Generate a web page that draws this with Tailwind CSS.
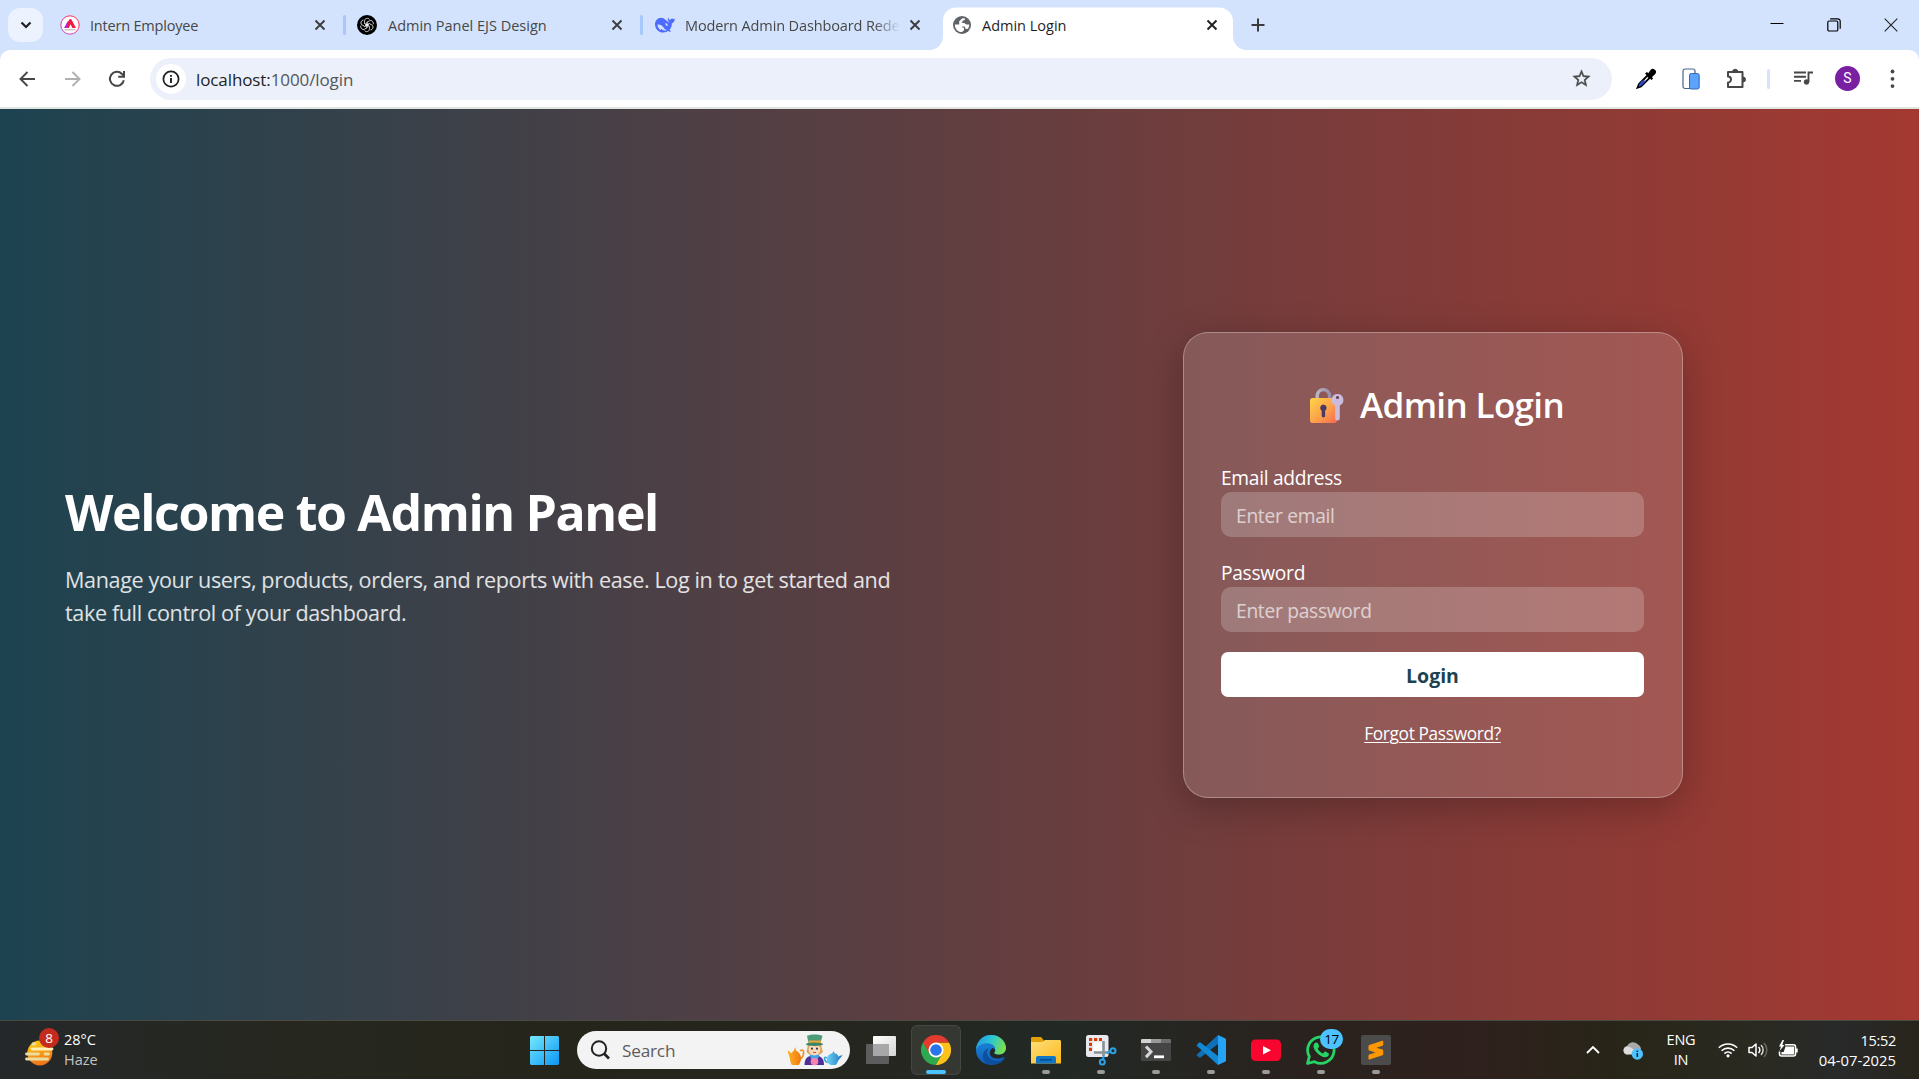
<!DOCTYPE html>
<html lang="en">
<head>
<meta charset="utf-8">
<title>Admin Login</title>
<script src="https://cdn.jsdelivr.net/npm/@tailwindcss/browser@4"></script>
</head>
<body class="flex h-[1079px] w-[1919px] flex-col overflow-hidden bg-[#d3e3fd] font-['Open_Sans','Noto_Sans',sans-serif]">

<!-- Tab strip -->
<div class="flex h-[50px] shrink-0 items-center text-[14.5px] text-[#474747]">
  <button class="ml-2 flex h-[34px] w-[35px] items-center justify-center rounded-xl bg-[#ecf2fe]">
    <svg class="h-3 w-3" viewBox="0 0 12 12" fill="none" stroke="#1f1f1f" stroke-width="2.2"><path d="M1.5 3.500 6 8l4.500-4.500"/></svg>
  </button>
  <div class="flex w-[300px] items-center pl-[17px] pr-[17px]">
    <svg class="h-5 w-5 shrink-0" viewBox="0 0 20 20">
      <defs><linearGradient id="ie" x1="0" y1="1" x2="1" y2="0"><stop offset="0" stop-color="#b44cf0"/><stop offset=".5" stop-color="#f0288c"/><stop offset="1" stop-color="#f43b2f"/></linearGradient></defs>
      <circle cx="10" cy="10" r="9.200" fill="#fff" stroke="url(#ie)" stroke-width="1"/>
      <path d="M4 13 7.500 6.500c.5-.8 1.200-.8 1.700 0L10 8l-2.200 5z" fill="#b02be0"/><path d="M9 5c.8-1.500 2-1.500 2.700 0L16 13h-3.600L10.500 9.200 8.800 13H6.500z" fill="#f5173f"/>
      <path d="M4.500 14.800h11" stroke="#b9b9b9" stroke-width="1.200"/>
    </svg>
    <span class="ml-[10px] flex-1 pt-[2px] tracking-[-0.2px] whitespace-nowrap">Intern Employee</span>
    <svg class="h-3 w-3" viewBox="0 0 12 12" stroke="#3c3c3c" stroke-width="1.900"><path d="m1.500 1.500 9 9m0-9-9 9"/></svg>
  </div>
  <div class="h-5 w-[3px] rounded bg-[#a8c7fa]"></div>
  <div class="flex w-[294px] items-center pl-[11px] pr-[17px]">
    <svg class="h-5 w-5 shrink-0" viewBox="0 0 20 20" fill="none">
      <circle cx="10" cy="10" r="10" fill="#000"/>
      <g stroke="#fff" stroke-width=".75">
        <path d="M7.600 8.600V5.800c0-2.700 3.900-3.200 4.900-1.300M7.600 8.600l4.800 2.800"/>
        <path d="M7.600 8.600V5.800c0-2.700 3.900-3.200 4.900-1.300M7.600 8.600l4.800 2.800" transform="rotate(60 10 10)"/>
        <path d="M7.600 8.600V5.800c0-2.700 3.900-3.200 4.900-1.300M7.600 8.600l4.800 2.800" transform="rotate(120 10 10)"/>
        <path d="M7.600 8.600V5.800c0-2.700 3.900-3.200 4.900-1.300M7.600 8.600l4.800 2.800" transform="rotate(180 10 10)"/>
        <path d="M7.600 8.600V5.800c0-2.700 3.900-3.200 4.900-1.300M7.600 8.600l4.800 2.800" transform="rotate(240 10 10)"/>
        <path d="M7.600 8.600V5.800c0-2.700 3.900-3.200 4.900-1.300M7.600 8.600l4.800 2.800" transform="rotate(300 10 10)"/>
      </g>
    </svg>
    <span class="ml-[11px] flex-1 pt-[2px] whitespace-nowrap">Admin Panel EJS Design</span>
    <svg class="h-3 w-3" viewBox="0 0 12 12" stroke="#3c3c3c" stroke-width="1.900"><path d="m1.500 1.500 9 9m0-9-9 9"/></svg>
  </div>
  <div class="h-5 w-[3px] rounded bg-[#a8c7fa]"></div>
  <div class="flex w-[300px] items-center pl-[12px] pr-[22px]">
    <svg class="h-5 w-5 shrink-0" viewBox="0 0 20 20">
      <path d="M19.700 3.800c-.8.2-1.300.2-1.900-.1-.8-.4-1.400-.3-2 .5-.7.900-1.200 1-1.700.3-.4-.6-.6-1-.5-1.900-.9.500-1 1.800-.6 2.800.3.9 1.100 1.500 1.500 2.300C12 6.500 11 4.800 8.500 3.300 4.500 1.300 0 4.600 0 9.200c0 4.800 3.800 8.300 8.400 8.300 2 0 3.500-.6 4.700-1.400 1 .6 2.200.7 3 .3-.5-.7-1.200-1-1.500-1.500 1.800-2 2.200-4 2.200-6.300 1.800-.7 3-2.200 2.900-4.800z" fill="#4d6bfe"/>
      <path d="M2.500 9.500c2.200-.3 4 .2 5.700 2.600 1 1.500 1.900 2.600 3.400 3.100-1.800.7-3.300.3-5-1.200-.8 0-.8.9-.2 1.400-2.300-.9-3.900-3.300-3.900-5.900z" fill="#d3e3fd"/><path d="M10.300 8.500c1.300-.7 2.600.6 2.300 2.400-.9.300-2.300-.8-2.300-2.400z" fill="#d3e3fd"/>
    </svg>
    <span class="ml-[10px] pt-[2px] tracking-[-0.12px] whitespace-nowrap [mask-image:linear-gradient(90deg,#000_88%,transparent_100%)]">Modern Admin Dashboard Rede</span>
    <svg class="ml-auto h-3 w-3 shrink-0" viewBox="0 0 12 12" stroke="#3c3c3c" stroke-width="1.900"><path d="m1.500 1.500 9 9m0-9-9 9"/></svg>
  </div>
  <div class="relative flex h-[50px] w-[290px] items-center pl-[10px] pr-[15px] text-[#1f1f1f]">
    <svg class="absolute -left-[14px] top-0 h-[50px] w-[318px]" viewBox="0 0 318 50" fill="#fff"><path d="M0 50c8 0 14-6 14-14V21c0-8 5.500-13.500 13.500-13.500h262C297.500 7.500 304 13 304 21v15c0 8 6 14 14 14z"/></svg>
    <svg class="relative h-[18px] w-[18px] shrink-0" viewBox="0 0 18 18">
      <circle cx="9" cy="9" r="9" fill="#5f6368"/>
      <path d="M1.900 8.500h4.600l2.500 1.200v1.600l2 .5v2.400l-2 1.900C5 16.400 1.500 12.500 1.900 8.500zM6.200 5.200 9.300 2.200l2.900.3-.5 1.500-2.200.7v1.500l-1.200.9h2.900l2 1.400 2.900-.1.200.9-1.100 3.500-2.500.2-1-2.400-2.800-.1L6.200 8.700z" fill="#fff"/>
    </svg>
    <span class="relative ml-[11px] flex-1 pt-[2px] whitespace-nowrap">Admin Login</span>
    <svg class="relative h-3 w-3" viewBox="0 0 12 12" stroke="#1f1f1f" stroke-width="1.900"><path d="m1.500 1.500 9 9m0-9-9 9"/></svg>
  </div>
  <svg class="ml-[18px] h-[14px] w-[14px]" viewBox="0 0 14 14" stroke="#3c3c3c" stroke-width="2"><path d="M7 .5v13M.5 7h13"/></svg>
  <div class="ml-auto mr-[21px] flex items-center gap-[43px]">
    <svg class="h-[14px] w-[14px]" viewBox="0 0 14 14" stroke="#000" stroke-width="1"><path d="M.5 5.500h13"/></svg>
    <svg class="h-[14px] w-[14px]" viewBox="0 0 14 14" fill="none" stroke="#000" stroke-width="1.200"><rect x=".8" y="3" width="10" height="10" rx="1.300"/><path d="M3.200.8h7.500a2.500 2.500 0 0 1 2.500 2.500v7.500"/></svg>
    <svg class="h-[14px] w-[14px]" viewBox="0 0 14 14" stroke="#222" stroke-width="1.100"><path d="m.7.7 12.600 12.600m0-12.600L.7 13.300"/></svg>
  </div>
</div>

<!-- Toolbar -->
<div class="flex h-[59px] shrink-0 items-center rounded-t-[10px] border-b-2 border-[#dfe5e0] bg-white pl-[18px] text-[#474747]">
  <svg class="h-[18px] w-[18px]" viewBox="0 0 18 18" fill="none" stroke="#474747" stroke-width="1.900"><path d="M17 9H3M9.500 2 2.500 9l7 7"/></svg>
  <svg class="ml-[28px] h-[18px] w-[18px]" viewBox="0 0 18 18" fill="none" stroke="#b0b0b0" stroke-width="1.900"><path d="M1 9h14M8.500 2l7 7-7 7"/></svg>
  <svg class="ml-[26px] h-[18px] w-[18px]" viewBox="0 0 18 18" fill="none" stroke="#474747" stroke-width="2"><path d="M15.800 10.200A7 7 0 1 1 14 4l1.800 1.800"/><path d="M16 1v5.800h-5.800"/></svg>
  <div class="ml-[24px] flex h-[42px] w-[1462px] items-center rounded-full bg-[#ebf0fa] pl-[6px] pr-[20px]">
    <div class="flex h-[30px] w-[30px] items-center justify-center rounded-full bg-white">
      <svg class="h-[18px] w-[18px]" viewBox="0 0 18 18" fill="none" stroke="#1f1f1f" stroke-width="1.700"><circle cx="9" cy="9" r="7.600"/><path d="M9 8v5M9 5v1.700" stroke-width="1.900"/></svg>
    </div>
    <p class="ml-[10px] pt-[2px] text-[17px] tracking-[-0.1px]"><span class="text-[#1f1f1f]">localhost:</span><span class="text-[#54565a]">1000/login</span></p>
    <svg class="ml-auto h-[21px] w-[21px]" viewBox="0 0 24 24" fill="#474747"><path d="M22 9.240l-7.190-.62L12 2 9.190 8.630 2 9.240l5.460 4.730L5.820 21 12 17.270 18.180 21l-1.630-7.030L22 9.240zM12 15.400l-3.760 2.270 1-4.280-3.320-2.880 4.380-.38L12 6.100l1.710 4.040 4.380.38-3.320 2.880 1 4.280L12 15.400z" stroke="#474747" stroke-width=".4"/></svg>
  </div>
  <svg class="ml-[24px] h-[21px] w-[21px]" viewBox="0 0 21 21">
    <path d="M11.500 7.500 3 16l-1.500 3.700L5 18.500l8.600-8.600z" fill="#fff" stroke="#000" stroke-width="1.800"/><path d="m6.200 12.500 4.200.3-5.500 5.200-2.400.8 1-3z" fill="#2c49c8"/>
    <path d="m9 5.500 2-1.500 1.300 1.200L14.500 2a3 3 0 0 1 4.600 4.200L16 9l1 1.400-1.500 1.700z" fill="#000"/>
  </svg>
  <svg class="ml-[25px] h-[22px] w-[18px]" viewBox="0 0 18 22">
    <path d="M1 3a2 2 0 0 1 2-2h8a2 2 0 0 1 2 2v17.500H3a2 2 0 0 1-2-2z" fill="#fff" stroke="#47658c" stroke-width="1.200"/><rect x="7.500" y="5.500" width="9.700" height="15.500" rx="1.800" fill="#5ba3fb" stroke="#3469b0"/>
  </svg>
  <svg class="ml-[25px] h-[23px] w-[23px]" viewBox="0 0 23 23" fill="none" stroke="#474747" stroke-width="2"><path d="M3 5h14.500v15H3v-4.500a3 3 0 0 0 0-6z" stroke-linejoin="round"/><path d="M7.500 5a2.700 2.700 0 0 1 5.400 0zM18 10a2.500 2.500 0 0 1 0 5z" fill="#474747" stroke-width="1"/></svg>
  <div class="ml-[19px] h-5 w-[3px] rounded bg-[#d3e3fd]"></div>
  <svg class="ml-[23px] h-[20px] w-[21px]" viewBox="0 0 21 20" fill="none" stroke="#474747" stroke-width="1.900"><path d="M1 3.500h12M1 7.700h12M1 11.900h7"/><circle cx="13.500" cy="13" r="2.300" fill="#474747" stroke-width="1"/><path d="M15.500 13V3.500H20"/></svg>
  <div class="ml-[21px] flex h-[25px] w-[25px] items-center justify-center rounded-full bg-[#7b1fa2] font-[Roboto] text-[14px] text-white">S</div>
  <svg class="ml-[30px] h-[20px] w-[5px]" viewBox="0 0 5 20" fill="#474747"><circle cx="2.500" cy="2.500" r="1.900"/><circle cx="2.500" cy="9.800" r="1.900"/><circle cx="2.500" cy="17.100" r="1.900"/></svg>
</div>

<!-- Page -->
<main class="flex flex-1 items-center justify-between bg-linear-to-r from-[#1d4350] to-[#a43931] [--tw-gradient-position:to_right] pl-[65px] pr-[236px] text-white">
  <section class="pb-[18px]">
    <h1 class="text-[50px] leading-[60px] font-bold tracking-[-1.35px]">Welcome to Admin Panel</h1>
    <p class="mt-[21px] text-[21.6px] leading-[33.500px] tracking-[-0.38px] whitespace-nowrap text-white/85">Manage your users, products, orders, and reports with ease. Log in to get started and<br>take full control of your dashboard.</p>
  </section>
  <form class="flex h-[466px] w-[500px] flex-col rounded-[25px] border border-white/30 bg-white/15 pr-[38px] pl-[37px] pt-[50px] shadow-[0_10px_38px_rgba(0,0,0,0.25)]">
    <h2 class="flex h-[44px] items-center pl-[88px] text-[35px] leading-[44px] font-semibold tracking-[-0.65px]">
      <svg class="h-[36px] w-[36px]" viewBox="0 0 36 36">
        <defs>
          <linearGradient id="lk" x1="0" y1="0" x2="1" y2="1"><stop offset="0" stop-color="#ffd446"/><stop offset=".55" stop-color="#fca14b"/><stop offset="1" stop-color="#f4694f"/></linearGradient>
          <linearGradient id="sh" x1="0" x2="1"><stop offset="0" stop-color="#b9b4c4"/><stop offset="1" stop-color="#9a8cab"/></linearGradient>
        </defs>
        <path d="M8.200 13V8.800a6.200 6.200 0 0 1 12.400 0V13" fill="none" stroke="url(#sh)" stroke-width="3.400"/>
        <rect x="1" y="11" width="27" height="25" rx="2.800" fill="url(#lk)"/>
        <path d="M14.400 17.500a3.500 3.500 0 0 0-1.700 6.400v4.800a1.700 1.700 0 0 0 3.400 0v-4.800a3.500 3.500 0 0 0-1.700-6.400z" fill="#4a3a63"/>
        <path fill-rule="evenodd" d="M28.500 7a6 6 0 0 0-2.300 11.500V31.300a2.300 2.300 0 0 0 4.600 0V18.500A6 6 0 0 0 28.500 7zm0 2a1.500 1.500 0 1 1 0 3 1.500 1.500 0 0 1 0-3z" fill="#cbbbdc"/><circle cx="28.500" cy="10.500" r="1.300" fill="#5a3d5c"/>
      </svg>
      <span class="ml-[15px]">Admin Login</span>
    </h2>
    <label class="mt-[38px] block h-[26px] text-[19.2px] leading-[26px] tracking-[-0.3px]" for="email">Email address</label>
    <input id="email" type="email" placeholder="Enter email" class="mt-px h-[45px] shrink-0 rounded-[10px] bg-white/20 px-[15px] pt-[2px] text-[19.2px] tracking-[-0.28px] placeholder:text-white/65">
    <label class="mt-[23px] block h-[26px] text-[19.2px] leading-[26px] tracking-[-0.3px]" for="password">Password</label>
    <input id="password" type="password" placeholder="Enter password" class="mt-px h-[45px] shrink-0 rounded-[10px] bg-white/20 px-[15px] pt-[2px] text-[19.2px] tracking-[-0.28px] placeholder:text-white/65">
    <button type="button" class="mt-[20px] h-[45px] shrink-0 rounded-[7px] bg-white pt-[3px] text-[19.500px] leading-[26px] font-bold text-[#1d4350]">Login</button>
    <a class="mt-[24px] self-center text-[17.3px] leading-[26px] tracking-[-0.35px] underline decoration-1 underline-offset-2">Forgot Password?</a>
  </form>
</main>

<!-- Taskbar -->
<footer class="flex h-[59px] shrink-0 items-center border-t border-[#4b4a42] bg-[linear-gradient(90deg,#25282a_0%,#26271e_16%,#25251c_30%,#25261f_46%,#222925_55%,#2a221e_68%,#2f211d_77%,#282518_84%,#2a2a22_92%,#28292a_96%,#28251b_100%)] text-[14.5px] text-white">
  <div class="relative ml-[24px] h-[40px] w-[36px]">
    <svg class="absolute top-[9px] left-0 h-[30px] w-[32px]" viewBox="0 0 32 30">
      <defs><linearGradient id="sun" x1="0" y1="0" x2=".3" y2="1"><stop offset="0" stop-color="#ffd30a"/><stop offset="1" stop-color="#f0761c"/></linearGradient></defs>
      <circle cx="15.800" cy="14" r="12.500" fill="url(#sun)"/>
      <g stroke="#eddc9f" stroke-width="2.800" stroke-linecap="round"><path d="M8 10h20" stroke="#fff0b8"/><path d="M2.500 15h12M21 15h3.500M9 5h2M2.500 20h21"/></g>
    </svg>
    <div class="absolute top-[-2px] left-[15px] flex h-5 w-5 items-center justify-center rounded-full bg-[#c42b1c] text-[13.500px]">8</div>
  </div>
  <div class="ml-[4px] w-[60px] leading-[20px]"><p>28°C</p><p class="text-[#c3c3c1]">Haze</p></div>

  <svg class="ml-[406px] h-[29px] w-[29px]" viewBox="0 0 29 29">
    <defs><linearGradient id="win" x1="0" y1="0" x2="1" y2="1"><stop offset="0" stop-color="#74e9fd"/><stop offset="1" stop-color="#0c95f5"/></linearGradient></defs>
    <path d="M1 0h13v14H0V1zM15 0h13l1 1v13H15zM0 15h14v14H1l-1-1zM15 15h14v13l-1 1H15z" fill="url(#win)"/>
  </svg>
  <div class="ml-[18px] flex h-[38px] w-[273px] items-center rounded-full bg-[#f3f3f3] pl-[13px]">
    <svg class="h-5 w-5" viewBox="0 0 20 20" fill="none" stroke="#222" stroke-width="2"><circle cx="9" cy="8.500" r="7.200"/><path d="m14 13.500 5 5" stroke-width="2.600"/></svg>
    <span class="ml-[12px] pt-px text-[17.2px] tracking-[-0.2px] text-[#5d5d5d]">Search</span>
    <svg class="ml-auto mr-[6px] h-[32px] w-[57px]" viewBox="0 0 57 32">
      <defs><linearGradient id="tp" x1="0" x2="1"><stop offset="0" stop-color="#ffb429"/><stop offset="1" stop-color="#f0780c"/></linearGradient><linearGradient id="tb" x1="0" x2="1"><stop offset="0" stop-color="#6fd2f3"/><stop offset="1" stop-color="#1774c4"/></linearGradient></defs>
      <path d="M13 17c4.500-3.500 5 4 .5 8" fill="none" stroke="#f08a1d" stroke-width="1.500"/>
      <path d="M8 13l1 3.500c3 1.500 5.500 5 5 9-.5 2.500-1.500 5-2.500 5.500H5c-1.500-2-2-4-2-6C2.500 22 .5 19 .8 16.800c2 .2 2.500 1.700 3.200 2.400L7 16.500z" fill="url(#tp)"/>
      <path d="M17.500 31c0-5 2-8.500 6-9h7.500c4 .5 6 4 6 9z" fill="#4d2f96"/><path d="M22.500 20.500h10l-2 5.500h-6z" fill="#3da7e8"/>
      <path d="M20.500 13c0-3 3-4 7-4s7 1 7 4l1.500 5-3 2.500H22.500l-3-2.500z" fill="#dca75e"/><ellipse cx="27.500" cy="15.500" rx="5.800" ry="6" fill="#fcd7b8"/>
      <circle cx="25" cy="14.700" r="1.100" fill="#32465a"/><circle cx="30" cy="14.700" r="1.100" fill="#32465a"/><path d="M26 18.500h3" stroke="#c9574a"/>
      <path d="M20 1.800c4.500-1.800 11-1.800 15.500 0L33.500 9h-12z" fill="#4c9c78"/><path d="M21.500 6.500h12.500v2.500H22z" fill="#e8a33d"/><ellipse cx="27.500" cy="10.300" rx="8.500" ry="1.700" fill="#3b8465"/>
      <circle cx="27.500" cy="27.500" r="3.800" fill="#f782ae"/>
      <path d="M40 24c-4-3-3 4 1 4.500" fill="none" stroke="#3aa5dc" stroke-width="1.500"/>
      <path d="M46.500 17l1.200 2.200c2.300.5 3.300 1.800 3.800 3.500 1-.9 2.500-1.500 4.500-1.200-2 1-3.500 3.500-5 5.500-.7 2-1.500 3.500-2.500 4h-5c-2.500-1.500-3.800-3.500-3.800-6 .3-3 2.500-5.300 5.500-5.800z" fill="url(#tb)"/>
    </svg>
  </div>

  <div class="ml-[16px] flex items-center">
    <svg class="h-[30px] w-[30px]" viewBox="0 0 30 30">
      <defs><linearGradient id="tv" x1="0" y1="0" x2="1" y2="1"><stop offset="0" stop-color="#fff"/><stop offset="1" stop-color="#d4d4d4"/></linearGradient></defs>
      <rect x="7" y="1" width="23" height="20" rx="1" fill="url(#tv)"/><rect x="0" y="9" width="23" height="20" rx="1" fill="#5d5d5d"/><path d="M7 9h16v12H7z" fill="#a7a7a7"/>
    </svg>
    <div class="relative ml-[15px] flex h-[50px] w-[50px] items-center justify-center rounded-md border border-white/8 bg-white/8">
      <svg class="h-[30px] w-[30px]" viewBox="0 0 48 48">
        <path d="M24 24 3.200 12A24 24 0 0 0 24 48l10.400-18z" fill="#2da94f"/><path d="M24 24h20.800A24 24 0 0 1 24 48l10.400-18z" fill="#fcc21b"/><path d="M24 48A24 24 0 0 0 44.800 12H24l10.400 18z" fill="#fcc21b"/><path d="M3.200 12a24 24 0 0 1 41.600 0H24L13.600 30z" fill="#e33b2e"/>
        <circle cx="24" cy="24" r="12" fill="#fff"/><circle cx="24" cy="24" r="9.300" fill="#2a74ea"/>
      </svg>
      <i class="absolute bottom-0 left-[14px] h-1 w-5 rounded-full bg-[#4cc2ff]"></i>
    </div>
    <div class="ml-[15px] flex gap-[25px]">
      <div class="h-[30px] w-[30px]">
        <svg viewBox="0 0 30 30">
          <defs><linearGradient id="e1" x1="0" y1=".2" x2="1" y2=".5"><stop offset="0" stop-color="#2196e8"/><stop offset=".5" stop-color="#2fc6cf"/><stop offset="1" stop-color="#7be04a"/></linearGradient><linearGradient id="e2" x1="0" y1="0" x2="0" y2="1"><stop offset="0" stop-color="#1b8fe0"/><stop offset="1" stop-color="#0f5cb4"/></linearGradient></defs>
          <circle cx="15" cy="15" r="15" fill="url(#e2)"/>
          <path d="M0 14.500C.7 6 7 0 15 0c9 0 15 6.500 15 12.800 0 4.200-3 6.900-7 6.900-3.500 0-5-1.200-5-2 0-.7 1.200-1.500 1.200-3.700 0-3.300-3.600-5.800-8-5.800C6 8.200 2 10.500 0 14.500z" fill="url(#e1)"/>
          <path d="M12.500 13c-3.500 4.500-.5 12 7 13 4 .3 7-.8 9-3 .8-.8 1-.3.700.3C26.500 27.500 21 30 15.500 30 8.500 30 6.500 24 7 20.500 7.300 17 9.500 14.200 12.500 13z" fill="#0c4f9e"/>
          <path d="M18.200 17.700c-.4.800 1.300 2 4.800 2 2.700 0 4.500-1 5.800-2.400L30 15v6l-2.300 1.200c-4 2-9.700 2-12.500-.7-2.200-2.500-1.700-6.500 1.300-8.500 2 .5 3 2 2.700 3z" fill="#23272a"/>
        </svg>
      </div>
      <div class="relative h-[30px] w-[30px]">
        <svg viewBox="0 0 30 30">
          <defs><linearGradient id="fo" x1="0" y1="0" x2="1" y2="1"><stop offset="0" stop-color="#ffe07a"/><stop offset="1" stop-color="#fbb81c"/></linearGradient></defs>
          <path d="M0 3.500C0 2.500.7 2 1.500 2H10l3 3.500V10H0z" fill="#e3a008"/><path d="M0 7h11l3-2h14.500c1 0 1.500.6 1.500 1.500V28.500H0z" fill="url(#fo)"/><path d="M5 23a2 2 0 0 1 2-2h16a2 2 0 0 1 2 2v5.500H5z" fill="#1076c8"/><path d="M9 24.800h12" stroke="#0a4b8c" stroke-width="1.600"/>
        </svg>
        <i class="absolute top-[35px] left-[11px] h-1 w-2 rounded-full bg-[#9b9b99]"></i>
      </div>
      <div class="relative h-[30px] w-[30px]">
        <svg viewBox="0 0 30 30" class="overflow-visible" fill="none">
          <rect width="22.500" height="22" rx="2.500" fill="#e9eaf0"/><path d="M4.500 16V4.500H16" stroke="#d83b01" stroke-width="3" stroke-dasharray="3.200 1.800"/><path d="M7.500 16V7.500h8.500V16z" fill="#fff"/>
          <path d="M17.500 6v15M8 17.500h14" stroke="#8b929a" stroke-width="2.600"/><circle cx="16.300" cy="27" r="2.500" stroke="#2aa2ea" stroke-width="2"/><circle cx="27" cy="15.800" r="2.500" stroke="#2aa2ea" stroke-width="2"/><path d="m17 24.500 1-4M24.500 16.500l-4 1.500" stroke="#2aa2ea" stroke-width="2"/>
        </svg>
        <i class="absolute top-[35px] left-[11px] h-1 w-2 rounded-full bg-[#9b9b99]"></i>
      </div>
      <div class="relative h-[30px] w-[30px]">
        <svg viewBox="0 0 30 30" fill="none">
          <rect y="4" width="30" height="22" rx="1.500" fill="#454545"/><path d="M0 8V5.500C0 4.500.5 4 1.500 4H10v4z" fill="#d2d2d2"/><path d="M10 4h10v4H10z" fill="#9a9a9a"/><path d="M20 4h8.500c1 0 1.500.6 1.500 1.500V8H20z" fill="#6d6d6d"/>
          <path d="m5 11.500 5 5.300-5 5.300" stroke="#d6d6d6" stroke-width="3"/><path d="M13 21.800h10" stroke="#fff" stroke-width="2.800"/>
        </svg>
        <i class="absolute top-[35px] left-[11px] h-1 w-2 rounded-full bg-[#9b9b99]"></i>
      </div>
      <div class="relative h-[30px] w-[30px]">
        <svg viewBox="0 0 30 30">
          <path d="M22 0 2 18.500 0.500 20 3 22.500h1.500L22 9z" fill="#0f6fb8"/><path d="M22 30 .5 10.500 3 7.500h1.500L22 21z" fill="#1287d4"/><path d="M22 0l7 3.300c.6.300 1 .8 1 1.500v20.400c0 .7-.4 1.200-1 1.500L22 30z" fill="#26a3f2"/>
        </svg>
        <i class="absolute top-[35px] left-[11px] h-1 w-2 rounded-full bg-[#9b9b99]"></i>
      </div>
      <div class="relative h-[30px] w-[30px]">
        <svg viewBox="0 0 30 30"><rect y="4.500" width="30" height="21.500" rx="4.500" fill="#f8062f"/><path d="m12 11 8 4.200-8 4.300z" fill="#fff"/></svg>
        <i class="absolute top-[35px] left-[11px] h-1 w-2 rounded-full bg-[#9b9b99]"></i>
      </div>
      <div class="relative h-[30px] w-[30px]">
        <svg viewBox="0 0 30 30" fill="none">
          <path d="M1.500 28.500 3.300 21.500A13.200 13.200 0 1 1 8.500 26.700z" stroke="#25d366" stroke-width="2.800" stroke-linejoin="round"/>
          <path d="M10 7.500c-.9 0-2.500 1.300-2.500 3.800 0 4 6.500 11 11.500 11 2.500 0 4-1.700 4-3.300 0-.8-3.500-2.600-4-2.600-.7 0-1.500 2-2.200 2-.8 0-5-3.400-5-4.700 0-.7 1.400-1.300 1.400-2.100 0-.6-1.200-3.600-1.700-3.900z" fill="#25d366"/>
        </svg>
        <div class="absolute top-[-6px] left-[14px] flex h-5 w-[23px] items-center justify-center rounded-full bg-[#4cc2ff] text-[13.5px] tracking-[-0.5px] text-black">17</div>
        <i class="absolute top-[35px] left-[11px] h-1 w-2 rounded-full bg-[#9b9b99]"></i>
      </div>
      <div class="relative h-[30px] w-[30px]">
        <svg viewBox="0 0 30 30"><rect width="30" height="30" rx="2" fill="#4b4b4b"/><path d="M7.500 11.200c0-.7.2-1 .8-1.200l13-4.200c.6-.2.900 0 .9.500v3.200c0 .6-.3 1-.8 1.200l-6 2 6 1.900c.6.200.8.600.8 1.200v3.200c0 .7-.2 1-.8 1.200l-13 4.300c-.6.200-.9 0-.9-.5v-3.200c0-.7.200-1 .8-1.200l6.200-2-6.200-2c-.6-.2-.8-.5-.8-1.100z" fill="#ff9800"/></svg>
        <i class="absolute top-[35px] left-[11px] h-1 w-2 rounded-full bg-[#9b9b99]"></i>
      </div>
    </div>
  </div>

  <div class="mr-[23px] ml-auto flex items-center">
    <svg class="h-[14px] w-[14px]" viewBox="0 0 14 14" fill="none" stroke="#fff" stroke-width="1.900"><path d="m1 10 6-6 6 6"/></svg>
    <svg class="ml-[23px] h-[20px] w-[20px]" viewBox="0 0 20 20"><path d="M4.500 14.500a4.300 4.300 0 0 1-.3-8.500A6.500 6.500 0 0 1 15 4.500c2 1 3 3 3 5z" fill="#a9a9a9"/><path d="M4.500 14.500a4 4 0 0 1-4-4.500c.5-3 4-4.500 7-2.500L16 13l-2 1.500z" fill="#dcdcdc"/><circle cx="14.300" cy="14" r="5.700" fill="#4cc2ff"/><path d="M14.300 13v4M14.300 10.500v1.500" stroke="#123" stroke-width="1.500"/></svg>
    <div class="ml-[22px] w-[32px] text-center leading-[20px] tracking-[-0.2px]"><p>ENG</p><p>IN</p></div>
    <svg class="ml-[21px] h-[20px] w-[20px]" viewBox="0 0 20 20" fill="none" stroke="#fff" stroke-width="1.600"><path d="M.8 7.800a13 13 0 0 1 18.400 0M3.600 10.800a9 9 0 0 1 12.800 0M6.400 13.600a5 5 0 0 1 7.200 0"/><circle cx="10" cy="15.800" r="1.600" fill="#fff" stroke="none"/></svg>
    <svg class="ml-[10px] h-[20px] w-[20px]" viewBox="0 0 20 20" fill="none" stroke="#fff" stroke-width="1.500"><path d="M1 7.500h3L8 4v12l-4-3.500H1z" stroke-linejoin="round"/><path d="M10.500 7a4 4 0 0 1 0 6"/><path d="M13 5a7 7 0 0 1 0 10" stroke="#d8d8d4"/><path d="M16 3a10 10 0 0 1 0 14" stroke="#6b695f"/></svg>
    <svg class="ml-[10px] h-[20px] w-[20px]" viewBox="0 0 20 20"><path d="M7 4.800h8.500a2 2 0 0 1 2 2V14a2 2 0 0 1-2 2H3.500a2 2 0 0 1-2-2v-2.500" fill="none" stroke="#fff" stroke-width="1.600"/><path d="M7.500 6.500H16v8H3.500V12h2.200z" fill="#fff"/><path d="M18 8.500h1.700v4H18z" fill="#fff"/><path d="M4.500 0 1 6.500h2L1.500 11l5-6H4.300L6 0z" fill="#fff"/></svg>
    <div class="ml-[20px] w-[78px] text-right leading-[20px]"><p class="tracking-[-0.3px]">15:52</p><p class="-mt-px text-[14.8px]">04-07-2025</p></div>
  </div>
</footer>
</body>
</html>
